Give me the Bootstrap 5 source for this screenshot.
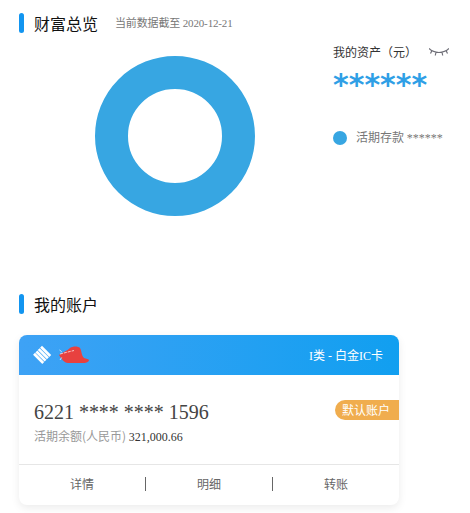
<!DOCTYPE html>
<html lang="zh">
<head>
<meta charset="utf-8">
<title>财富总览</title>
<link rel="stylesheet" href="https://cdn.jsdelivr.net/npm/bootstrap@5.3.0/dist/css/bootstrap.min.css">
<style>
html,body{width:470px;height:513px;overflow:hidden;background:#fff}
body{font-family:"Liberation Serif","Noto Sans CJK SC",serif;color:#333;padding:13px 0 0 19px}
.sec-head{height:20px}
.sec-bar{width:5px;height:20px;border-radius:3px;background:#1295f0}
.sec-title{font:16px/20px "Noto Sans CJK SC",sans-serif;color:#111;margin-left:10px}
.sec-note{font-size:11px;line-height:20px;color:#777;margin-left:17px;letter-spacing:-.15px}
.overview{height:261px}
.donut-box{width:314px;padding:23px 0 0 76px}
.side{padding-top:10px;width:120px}
.asset-label{font:12px/18px "Noto Sans CJK SC",sans-serif;color:#333;width:96px}
.stars{font:700 30px/32px "DejaVu Sans",sans-serif;color:#2f9fe6;height:32px;margin-top:8px;white-space:nowrap}
.legend{margin-top:28px;font:12px/16px "Noto Sans CJK SC",sans-serif;color:#777;white-space:nowrap}
.legend-dot{width:14px;height:14px;border-radius:50%;background:#37a6e2;margin-right:9px}
.legend b{font:400 12px/16px "Liberation Serif",serif}
.acct{width:380px;height:170px;margin-top:21px;border:0;border-radius:8px;box-shadow:0 3px 9px rgba(0,0,0,.08);overflow:hidden}
.acct-head{height:40px;background:linear-gradient(90deg,#3ea2f5,#119ff0);color:#fff;padding:0 16px 0 13px;font:12px "Liberation Serif","Noto Sans CJK SC",serif}
.acct-body{height:89px;padding:25px 0 0 15px}
.acct-no{font-size:20px;line-height:24px;color:#444;letter-spacing:-.02px;white-space:nowrap}
.acct-bal{font:12px/16px "Noto Sans CJK SC",sans-serif;color:#999;margin-top:4px}
.acct-bal span{font:12px/16px "Liberation Serif",serif;color:#333}
.acct-tag{top:25px;right:0;height:20px;padding:0 9px 0 7px;border-radius:10px 0 0 10px;background:#f0ad4e;color:#fff;font:12px/20px "Noto Sans CJK SC",sans-serif}
.acct-foot{height:41px;padding-bottom:2px;border-top:1px solid #e6e6e6;font:12px/1 "Noto Sans CJK SC",sans-serif;color:#666}
.foot-item{width:126px}
.foot-sep{width:1px;height:14px;background:#666}
.redact{margin-left:6px}
</style>
</head>
<body>
<section>
  <div class="sec-head d-flex align-items-center">
    <span class="sec-bar"></span>
    <span class="sec-title">财富总览</span>
    <span class="sec-note">当前数据截至 2020-12-21</span>
  </div>
  <div class="overview d-flex">
    <div class="donut-box">
      <svg width="160" height="160" viewBox="0 0 160 160" role="img" aria-label="活期存款"><circle cx="80" cy="80" r="63.5" fill="none" stroke="#37a6e2" stroke-width="33"/></svg>
    </div>
    <div class="side">
      <div class="d-flex align-items-center">
        <span class="asset-label">我的资产（元）</span>
        <svg width="20" height="12" viewBox="0 0 20 12" fill="none" stroke="#6f6f78" stroke-width="1.200" aria-hidden="true"><path d="M0 2.500c3 3 6 4 10 4s7-1 10-4M3 4.500 1.500 7.500M7 6l-.7 3.500M13 6l.7 3.500M17 4.500l1.500 3"/></svg>
      </div>
      <div class="stars">******</div>
      <div class="legend d-flex align-items-center">
        <span class="legend-dot"></span><span>活期存款 <b>******</b></span>
      </div>
    </div>
  </div>
</section>
<section>
  <div class="sec-head d-flex align-items-center">
    <span class="sec-bar"></span>
    <span class="sec-title">我的账户</span>
  </div>
  <div class="card acct">
    <div class="acct-head d-flex align-items-center justify-content-between">
      <div class="d-flex align-items-center">
        <svg width="20" height="20" viewBox="0 0 20 20" aria-hidden="true"><g fill="#fff" transform="rotate(45 10 10)"><rect x="3.500" y="3.500" width="13" height="2.700"/><rect x="3.500" y="6.800" width="13" height="2.700"/><rect x="3.500" y="10.100" width="13" height="2.700"/><rect x="3.500" y="13.400" width="13" height="2.700"/></g></svg>
        <svg class="redact" width="32" height="18" viewBox="0 0 32 18" aria-hidden="true"><path d="M1 9C5 6 9 5 12 2c3-2 8-2 10 0 2 3 1 7 4 10 2 1 5 1 5 2 0 2-3 3-5 3H10C6 17 3 12 1 9z" fill="#e8413f"/><path d="M2 8l14-3.500M1.500 4 4 6M2 14l2-3" stroke="#fff" stroke-width=".7" stroke-dasharray="3 1" fill="none"/></svg>
      </div>
      <span>I类 - 白金IC卡</span>
    </div>
    <div class="acct-body position-relative">
      <div class="acct-no">6221 **** **** 1596</div>
      <div class="acct-bal">活期余额(人民币) <span>321,000.66</span></div>
      <span class="acct-tag position-absolute">默认账户</span>
    </div>
    <div class="acct-foot d-flex align-items-center">
      <span class="foot-item text-center">详情</span>
      <span class="foot-sep"></span>
      <span class="foot-item text-center">明细</span>
      <span class="foot-sep"></span>
      <span class="foot-item text-center">转账</span>
    </div>
  </div>
</section>
<script src="https://cdn.jsdelivr.net/npm/bootstrap@5.3.0/dist/js/bootstrap.bundle.min.js"></script>
</body>
</html>
